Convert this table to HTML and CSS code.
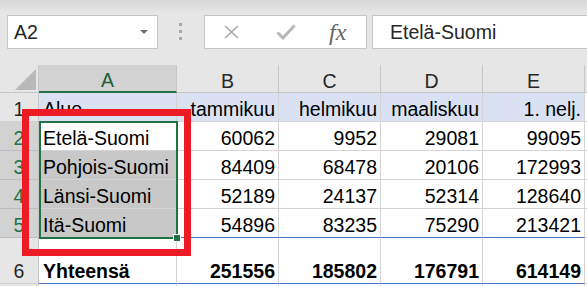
FILE: index.html
```html
<!DOCTYPE html>
<html lang="fi">
<head>
    <meta charset="UTF-8">
    <meta name="viewport" content="width=device-width, initial-scale=1.0">
    <title>Alueet</title>
    <link rel="stylesheet" href="styles.css">
</head>
<body>
    <div class="formula-bar">
        <div class="name-box">
            <span>A2</span>
            <span class="caret"></span>
        </div>
        <div class="grip"><span></span><span></span><span></span></div>
        <div class="fx-box">
            <svg class="icon-cancel" width="17" height="14" viewBox="0 0 17 14">
                <path d="M2 1L15 13M15 1L2 13" stroke="#a8a8a8" stroke-width="1.6" fill="none"/>
            </svg>
            <svg class="icon-enter" width="20" height="16" viewBox="0 0 20 16">
                <path d="M1.5 8.5L7 14L18.5 1.5" stroke="#b8b8b8" stroke-width="3" fill="none"/>
            </svg>
            <span class="fx">fx</span>
        </div>
        <div class="formula-input">Etelä-Suomi</div>
    </div>

    <div class="sheet">
        <!-- column headers -->
        <div class="corner">
            <svg width="21" height="21" viewBox="0 0 21 21"><polygon points="21,0 21,21 0,21" fill="#b8b8b8"/></svg>
        </div>
        <div class="col-head active">A</div>
        <div class="col-head">B</div>
        <div class="col-head">C</div>
        <div class="col-head">D</div>
        <div class="col-head">E</div>
        <div class="col-head"></div>

        <!-- row 1 -->
        <div class="row-head">1</div>
        <div class="cell thead">Alue</div>
        <div class="cell thead num">tammikuu</div>
        <div class="cell thead num">helmikuu</div>
        <div class="cell thead num">maaliskuu</div>
        <div class="cell thead num">1. nelj.</div>
        <div class="cell"></div>

        <!-- row 2 -->
        <div class="row-head sel">2</div>
        <div class="cell">Etelä-Suomi</div>
        <div class="cell num">60062</div>
        <div class="cell num">9952</div>
        <div class="cell num">29081</div>
        <div class="cell num">99095</div>
        <div class="cell"></div>

        <!-- row 3 -->
        <div class="row-head sel">3</div>
        <div class="cell picked">Pohjois-Suomi</div>
        <div class="cell num">84409</div>
        <div class="cell num">68478</div>
        <div class="cell num">20106</div>
        <div class="cell num">172993</div>
        <div class="cell"></div>

        <!-- row 4 -->
        <div class="row-head sel">4</div>
        <div class="cell picked">Länsi-Suomi</div>
        <div class="cell num">52189</div>
        <div class="cell num">24137</div>
        <div class="cell num">52314</div>
        <div class="cell num">128640</div>
        <div class="cell"></div>

        <!-- row 5 -->
        <div class="row-head sel">5</div>
        <div class="cell picked sum-top">Itä-Suomi</div>
        <div class="cell num sum-top">54896</div>
        <div class="cell num sum-top">83235</div>
        <div class="cell num sum-top">75290</div>
        <div class="cell num sum-top">213421</div>
        <div class="cell"></div>

        <!-- row 6 -->
        <div class="row-head">6</div>
        <div class="cell total">Yhteensä</div>
        <div class="cell num total">251556</div>
        <div class="cell num total">185802</div>
        <div class="cell num total">176791</div>
        <div class="cell num total">614149</div>
        <div class="cell"></div>

        <!-- row 7, only its top edge is in view -->
        <div class="row-head edge"></div>
        <div class="cell edge"></div>
        <div class="cell edge"></div>
        <div class="cell edge"></div>
        <div class="cell edge"></div>
        <div class="cell edge"></div>
        <div class="cell edge"></div>

        <div class="selection"></div>
        <div class="fill-handle"></div>
        <div class="callout"></div>
    </div>
</body>
</html>
```

FILE: styles.css
```css
body {
    margin: 0;
    width: 587px;
    height: 286px;
    overflow: hidden;
    background-color: #e6e6e6;
    font-family: "Liberation Sans", Arial, sans-serif;
    font-size: 19.5px;
}

/* formula bar */
.formula-bar {
    display: flex;
    align-items: flex-start;
    height: 65px;
    box-sizing: border-box;
    padding: 15px 0 0 7px;
    background: linear-gradient(#d8d8d8, #e6e6e6 13px);
}
.name-box {
    display: flex;
    align-items: center;
    width: 151px;
    height: 34px;
    box-sizing: border-box;
    padding-left: 6px;
    background-color: #fff;
    border: 1px solid #c6c6c6;
    color: #262626;
}
.caret {
    margin-left: auto;
    margin-right: 9px;
    border-left: 4px solid transparent;
    border-right: 4px solid transparent;
    border-top: 4px solid #707070;
}
.grip {
    display: flex;
    flex-direction: column;
    gap: 4px;
    margin: 8px 0 0 21px;
}
.grip span {
    width: 3px;
    height: 3px;
    background-color: #a8a8a8;
}
.fx-box {
    display: flex;
    align-items: center;
    width: 163px;
    height: 34px;
    box-sizing: border-box;
    margin-left: 22px;
    padding-left: 18px;
    background-color: #fff;
    border: 1px solid #c6c6c6;
}
.icon-enter {
    margin-left: 36px;
}
.fx {
    margin-left: 33px;
    font-family: "Liberation Serif", "Times New Roman", serif;
    font-style: italic;
    font-size: 24px;
    color: #666;
}
.formula-input {
    display: flex;
    align-items: center;
    flex: 1;
    height: 34px;
    box-sizing: border-box;
    margin-left: 5px;
    padding-left: 17px;
    background-color: #fff;
    border: 1px solid #c6c6c6;
    border-right: none;
    color: #262626;
}

/* sheet grid */
.sheet {
    position: relative;
    display: grid;
    grid-template-columns: 39px 138px repeat(4, 102px) 1fr;
    grid-template-rows: 28px repeat(5, 29px) 46px 2px;
    background-color: #fff;
}
.corner {
    display: flex;
    justify-content: flex-end;
    align-items: flex-end;
    padding: 0 2px 2px 0;
    background-color: #e6e6e6;
    border-right: 1px solid #c6c6c6;
    border-bottom: 1px solid #c6c6c6;
}
.corner svg {
    display: block;
}
.col-head {
    display: flex;
    justify-content: center;
    align-items: flex-end;
    line-height: 22px;
    background-color: #e6e6e6;
    border-right: 1px solid #c6c6c6;
    border-bottom: 1px solid #c6c6c6;
    color: #262626;
}
.col-head.active {
    background-color: #d2d2d2;
    border-bottom: 2px solid #217346;
    color: #1d5f3a;
}
.row-head {
    display: flex;
    justify-content: center;
    align-items: flex-end;
    line-height: 24px;
    background-color: #e6e6e6;
    border-right: 1px solid #c6c6c6;
    border-bottom: 1px solid #d0d0d0;
    color: #262626;
}
.row-head.sel {
    background-color: #d2d2d2;
    border-bottom-color: #bcbcbc;
    color: #217346;
}
.cell {
    display: flex;
    align-items: flex-end;
    padding: 0 3px 0 4px;
    line-height: 24px;
    white-space: nowrap;
    color: #000;
    border-right: 1px solid #d4d4d4;
    border-bottom: 1px solid #d4d4d4;
}
.edge {
    border-bottom: none;
}
.num {
    justify-content: flex-end;
}
.thead {
    background-color: #d9e1f2;
}
.picked {
    background-color: #c8c8c8;
}
.sum-top {
    border-bottom-color: #4472c4;
}
.total {
    font-weight: bold;
    border-bottom-color: #4472c4;
}

/* overlays */
.selection {
    position: absolute;
    left: 39px;
    top: 56px;
    width: 139px;
    height: 118px;
    box-sizing: border-box;
    border: 2px solid #217346;
}
.fill-handle {
    position: absolute;
    left: 173px;
    top: 169px;
    width: 8px;
    height: 8px;
    box-sizing: border-box;
    background-color: #217346;
    border: 1px solid #fff;
}
.callout {
    position: absolute;
    left: 22px;
    top: 44px;
    width: 169px;
    height: 147px;
    box-sizing: border-box;
    border: 7px solid #ed1c24;
}
```
